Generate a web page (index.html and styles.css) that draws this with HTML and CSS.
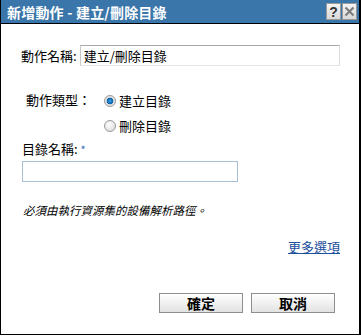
FILE: index.html
```html
<!DOCTYPE html>
<html lang="zh-Hant">
<head>
<meta charset="UTF-8">
<title>新增動作 - 建立/刪除目錄</title>
<link rel="stylesheet" href="styles.css">
</head>
<body>
<div class="dialog">
    <div class="titlebar">
        <span class="title">新增動作 - 建立/刪除目錄</span>
        <span class="tb-buttons">
            <span class="tb-btn">?</span>
            <span class="tb-btn">
                <svg width="11" height="11" viewBox="0 0 11 11"><path d="M1.5 1.5 L9.5 9.5 M9.5 1.5 L1.5 9.5" stroke="#7a7a7a" stroke-width="2"/></svg>
            </span>
        </span>
    </div>
    <div class="content">
        <div class="name-row">
            <label class="name-label">動作名稱:</label>
            <div class="text-box name-box">建立/刪除目錄</div>
        </div>

        <div class="type-row">
            <span class="type-label">動作類型：</span>
            <div class="radios">
                <div class="radio-item"><span class="radio checked"></span>建立目錄</div>
                <div class="radio-item"><span class="radio"></span>刪除目錄</div>
            </div>
        </div>

        <div class="dir-label">目錄名稱: <span class="req">*</span></div>
        <div class="text-box dir-box"></div>

        <p class="note">必須由執行資源集的設備解析路徑。</p>

        <div class="more"><a href="#">更多選項</a></div>

        <div class="actions">
            <button class="btn">確定</button>
            <button class="btn">取消</button>
        </div>
    </div>
</div>
</body>
</html>
```

FILE: styles.css
```css
body {
    margin: 0;
    font-family: "Noto Sans CJK TC", "Liberation Sans", sans-serif;
    font-size: 13px;
    color: #000;
    background: #fff;
}

.dialog {
    width: 358px;
    height: 334px;
    border-left: 1px solid #000;
    border-right: 2px solid #000;
    border-bottom: 1px solid #000;
    display: flex;
    flex-direction: column;
}

.titlebar {
    height: 23px;
    background: #3a76aa;
    border-bottom: 1px solid #000;
    display: flex;
    align-items: center;
    justify-content: space-between;
    padding-left: 6px;
    padding-right: 2px;
}

.title {
    color: #fff;
    font-weight: bold;
    font-size: 14px;
    line-height: 1;
    letter-spacing: 0.2px;
}

.tb-buttons {
    display: flex;
    gap: 1px;
}

.tb-btn {
    width: 13px;
    height: 15px;
    background: linear-gradient(#f4f4f4, #d8d8d8);
    border: 1px solid #9a9a9a;
    display: flex;
    align-items: center;
    justify-content: center;
    font-family: "Liberation Sans", sans-serif;
    font-weight: bold;
    font-size: 14px;
    color: #333;
}

.content {
    padding: 21px 19px 0 20px;
    flex: 1;
}

.name-row {
    display: flex;
    align-items: center;
    gap: 3px;
}

.text-box {
    box-sizing: border-box;
    border: 1px solid #b3b3b3;
    border-color: #a9a9a9 #dcdcdc #e4e4e4 #c9c9c9;
    background: #fff;
    height: 21px;
    line-height: 19px;
    padding-left: 3px;
}

.name-box {
    flex: 1;
}

.type-row {
    display: flex;
    margin-top: 24px;
    margin-left: 5px;
}

.type-label {
    width: 78px;
    line-height: 20px;
}

.radios {
    display: flex;
    flex-direction: column;
    gap: 5px;
    padding-top: 1px;
}

.radio-item {
    display: flex;
    align-items: center;
    gap: 3px;
    line-height: 20px;
}

.radio {
    box-sizing: border-box;
    width: 12px;
    height: 12px;
    border-radius: 50%;
    border: 1px solid #9a9a9a;
    background: radial-gradient(circle at 40% 35%, #ffffff, #d4d4d4);
    display: inline-block;
}

.radio.checked {
    background: radial-gradient(circle at 50% 50%, #3aa0e6 0, #0a5fa6 3px, #d9d9d9 3.6px, #f4f4f4 6px);
}

.dir-label {
    margin-top: 3px;
    line-height: 20px;
    margin-left: 1px;
}

.req {
    color: #2a6ec0;
    font-size: 11px;
    vertical-align: top;
}

.dir-box {
    width: 216px;
    margin-top: 2px;
    margin-left: 1px;
    border: 1px solid #a9c0d8;
}

.note {
    margin: 20px 0 0 2px;
    font-style: italic;
    font-size: 11.5px;
    line-height: 17px;
}

.more {
    text-align: right;
    margin-top: 19px;
    line-height: 17px;
}

.more a {
    color: #1c4f9c;
    text-decoration: underline;
}

.actions {
    display: flex;
    justify-content: flex-end;
    gap: 8px;
    margin-top: 38px;
    padding-right: 5px;
}

.btn {
    width: 84px;
    height: 20px;
    padding: 0;
    border: 1px solid #8e8e8e;
    background: linear-gradient(#ffffff, #e2e2e2);
    font-family: "Noto Sans CJK TC", sans-serif;
    font-weight: bold;
    font-size: 14px;
    line-height: 18px;
    color: #000;
}
```
